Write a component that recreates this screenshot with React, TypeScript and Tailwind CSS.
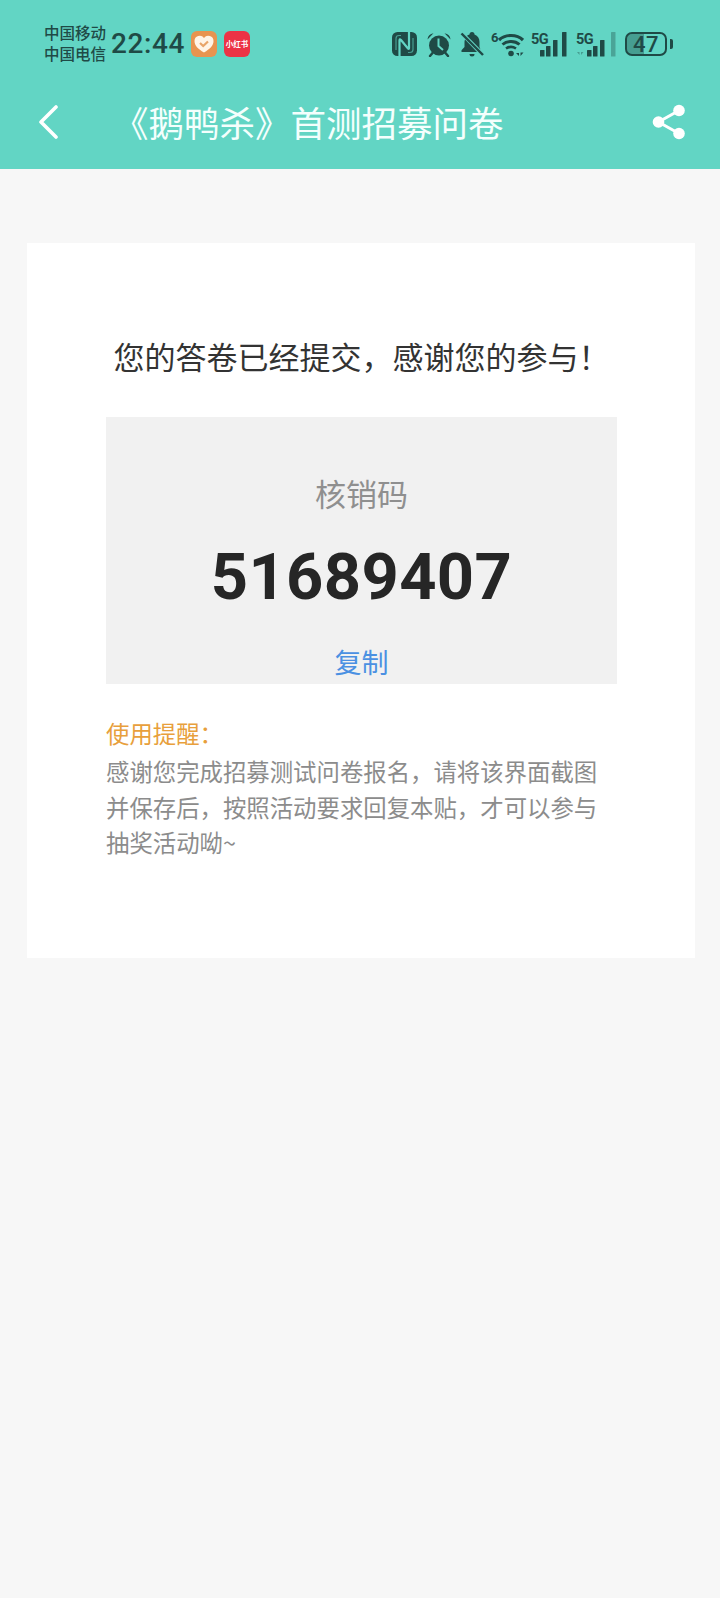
import React from 'react';

const cjk = { fontFamily: '"Noto Sans CJK SC", "Noto Sans", sans-serif' };

const NfcIcon = () => (
  <svg width="25" height="26" viewBox="0 0 25 26" fill="none">
    <rect x="0" y="1" width="25" height="24" rx="5.500" fill="#1f4a46" />
    <path d="M7.500 25V9.500q0-2 1.500-.5l7 8.500q1 1 1-.5V1" stroke="#62d5c4" strokeWidth="2.200" />
    <path d="M4 19V7.500Q4 4.500 7 4.500H9 M21 7V18.500Q21 21.500 18 21.500H16" stroke="#62d5c4" strokeWidth="1.200" opacity="0.6" />
  </svg>
);

const AlarmIcon = () => (
  <svg className="ml-[9px]" width="26" height="26" viewBox="0 0 26 26" fill="#1f4a46">
    <circle cx="13" cy="14.500" r="10" />
    <path d="M1.500 8.500Q2 3 7.500 2.200z M24.500 8.500Q24 3 18.500 2.200z" />
    <path d="M6.500 22 4 25 M19.500 22 22 25" stroke="#1f4a46" strokeWidth="2.400" strokeLinecap="round" />
    <path d="M12.500 7.500V15L17 19" stroke="#62d5c4" strokeWidth="2" fill="none" />
  </svg>
);

const BellOffIcon = () => (
  <svg className="ml-[8px]" width="24" height="26" viewBox="0 0 24 26" fill="#1f4a46">
    <path d="M9.500 3.500a2.500 2.500 0 0 1 5 0c3.500 1.200 5 4 5 7.500v5l1 2.500L7 4.700c.7-.5 1.600-.9 2.500-1.200z" />
    <path d="M5 8.500 17 21H1.500v-1.800L4.500 16v-5c0-.9.200-1.700.5-2.500z" />
    <path d="M9.500 23h5a2.500 2.500 0 0 1-5 0z" />
    <path d="M1.500 2.500 23 24" stroke="#1f4a46" strokeWidth="2.400" />
  </svg>
);

const WifiIcon = () => (
  <svg className="ml-[7px]" width="33" height="26" viewBox="0 0 33 26" fill="none">
    <text x="0" y="11" fill="#1f4a46" fontSize="13" fontWeight="700" fontFamily="Roboto, sans-serif">6</text>
    <path d="M8 9C14 3 26 3 32 9" stroke="#1f4a46" strokeWidth="3.200" />
    <path d="M11.500 13.500C16 9.500 24 9.500 28.500 13.500" stroke="#1f4a46" strokeWidth="3" />
    <path d="M15 17.500C18 15.500 22 15.500 25 17.500" stroke="#1f4a46" strokeWidth="2.600" />
    <circle cx="20" cy="22.500" r="2.800" fill="#1f4a46" />
    <path d="M28 18v7l-3-3h3z M29.500 18v7l3-3.500h-3z" fill="#1f4a46" />
  </svg>
);

const SignalIcon = () => (
  <svg className="ml-[7px]" width="36" height="26" viewBox="0 0 36 26" fill="#1f4a46">
    <text x="0" y="12.500" fontSize="14.500" fontWeight="700" fontFamily="Roboto, sans-serif" letterSpacing="-0.5">5G</text>
    <rect x="9" y="19" width="4.500" height="6.500" rx="0.500" />
    <rect x="15" y="15" width="4.500" height="10.500" rx="0.500" />
    <rect x="22" y="9" width="4.500" height="16.500" rx="0.500" />
    <rect x="31" y="1" width="4.500" height="24.500" rx="0.500" />
  </svg>
);

const SignalDimIcon = () => (
  <svg className="ml-[9px]" width="40" height="26" viewBox="0 0 40 26" fill="#1f4a46">
    <text x="0" y="12.500" fontSize="14.500" fontWeight="700" fontFamily="Roboto, sans-serif" letterSpacing="-0.5">5G</text>
    <path d="M3.500 18v6l-2.500-3h2.500z M5 18v6l2.500-3H5z" opacity="0.4" />
    <rect x="11" y="19" width="4.500" height="6.500" rx="0.500" />
    <rect x="17" y="15" width="4.500" height="10.500" rx="0.500" />
    <rect x="24" y="9" width="4.500" height="16.500" rx="0.500" />
    <rect x="35" y="1" width="4.500" height="24.500" rx="0.500" opacity="0.35" />
  </svg>
);

const BatteryIcon = () => (
  <div className="ml-[9px] flex items-center gap-[3px]">
    <div className="relative w-[42px] h-[24px] rounded-[7px] border-[2.500px] border-[#1f4a46] flex items-center justify-center">
      <div className="absolute left-0 top-0 bottom-0 w-[45%] rounded-l-[4px] bg-[#1f4a46] opacity-40" />
      <span className="relative text-[22px] leading-[19px] font-medium text-[#1f4a46] font-['Roboto',sans-serif] tracking-[0.5px]">47</span>
    </div>
    <div className="w-[3px] h-[10px] rounded-r-[2px] bg-[#1f4a46]" />
  </div>
);

const HeartApp = () => (
  <div className="w-[26px] h-[26px] rounded-[6px] bg-[#e8944f] flex items-center justify-center">
    <svg width="20" height="18" viewBox="0 0 20 18">
      <path d="M10 17.500C4 14 .5 10.500.5 6A5.200 5.200 0 0 1 10 3a5.200 5.200 0 0 1 9.500 3c0 4.500-3.500 8-9.500 11.500z" fill="#fff4e6" />
      <path d="M6 8l3.200 3L14 6.500" stroke="#e8a468" strokeWidth="2.200" fill="none" />
    </svg>
  </div>
);

const RedBookApp = () => (
  <div className="w-[26px] h-[26px] rounded-[6px] bg-[#ec3345] flex items-center justify-center">
    <span className="text-[7.500px] leading-none font-bold text-white whitespace-nowrap" style={cjk}>小红书</span>
  </div>
);

const App: React.FC = () => {
  return (
    <div className="w-[720px] h-[1598px] bg-[#f7f7f7] flex flex-col" style={cjk}>
      {/* Status bar + title */}
      <div className="bg-[#62d5c4] h-[169px] shrink-0 flex flex-col">
        <div className="h-[88px] flex items-center pl-[44px] pr-[47px]">
          <div className="text-[15.500px] leading-[21px] font-medium text-[#1f4a46] whitespace-nowrap -mt-[2px]">
            <div>中国移动</div>
            <div>中国电信</div>
          </div>
          <span className="ml-[5px] text-[28px] leading-none font-medium tracking-[0.6px] text-[#1f4a46] font-['Roboto',sans-serif]">22:44</span>
          <div className="ml-[6px] flex gap-[7px]">
            <HeartApp />
            <RedBookApp />
          </div>
          <div className="ml-auto flex items-center">
            <NfcIcon />
            <AlarmIcon />
            <BellOffIcon />
            <WifiIcon />
            <SignalIcon />
            <SignalDimIcon />
            <BatteryIcon />
          </div>
        </div>
        <div className="h-[81px] pb-[14px] flex items-center pl-[38px] pr-[34px]">
          <svg width="22" height="34" viewBox="0 0 22 34" fill="none" stroke="#fff" strokeWidth="3.600" strokeLinecap="round" strokeLinejoin="round">
            <path d="M18 2 3 17l15 15" />
          </svg>
          <h1 className="ml-[53px] text-[35.500px] leading-none font-normal text-[#f4fffd] whitespace-nowrap">《鹅鸭杀》首测招募问卷</h1>
          <svg className="ml-auto" width="34" height="36" viewBox="0 0 34 36" fill="#fff">
            <circle cx="27" cy="6.500" r="5.800" />
            <circle cx="6.500" cy="18" r="5.800" />
            <circle cx="27" cy="29.500" r="5.800" />
            <path d="M27 6.500 6.500 18 27 29.500" fill="none" stroke="#fff" strokeWidth="3" />
          </svg>
        </div>
      </div>

      {/* Result card */}
      <div className="mt-[74px] ml-[27px] w-[668px] h-[715px] bg-white pl-[79px] pr-[78px] flex flex-col">
        <p className="mt-[90px] text-[31px] leading-[46px] text-[#333333] text-center whitespace-nowrap">您的答卷已经提交，感谢您的参与！</p>
        <div className="mt-[38px] h-[267px] bg-[#f1f1f1] flex flex-col items-center">
          <p className="mt-[53px] text-[31px] leading-[46px] text-[#8f8f8f]">核销码</p>
          <p className="mt-[23px] text-[65px] leading-[76px] font-bold text-[#262626] font-['Roboto',sans-serif] tracking-[0.4px]">51689407</p>
          <button className="mt-[27px] text-[27px] leading-[40px] text-[#4a90e2]">复制</button>
        </div>
        <p className="mt-[31px] text-[23.400px] leading-[36px] text-[#e89f3c]">使用提醒：</p>
        <p className="mt-[3px] text-[23.400px] leading-[35.500px] text-[#8c8c8c]">感谢您完成招募测试问卷报名，请将该界面截图并保存后，按照活动要求回复本贴，才可以参与抽奖活动呦~</p>
      </div>
    </div>
  );
};

export default App;
